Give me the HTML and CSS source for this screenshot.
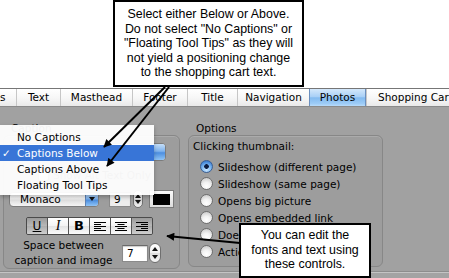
FILE: index.html
```html
<!DOCTYPE html>
<html>
<head>
<meta charset="utf-8">
<link rel="stylesheet" href="styles.css">
</head>
<body>
<div class="page">
  <header class="top">
    <div class="callout callout-top">Select either Below or Above.<br>Do not select "No Captions" or<br>"Floating Tool Tips" as they will<br>not yield a positioning change<br>to the shopping cart text.</div>
  </header>

  <nav class="tabs">
    <span class="tab tab-s">s</span>
    <span class="tab tab-text">Text</span>
    <span class="tab tab-masthead">Masthead</span>
    <span class="tab tab-footer">Footer</span>
    <span class="tab tab-title">Title</span>
    <span class="tab tab-nav">Navigation</span>
    <span class="tab tab-photos active">Photos</span>
    <span class="tab tab-cart">Shopping Cart</span>
  </nav>

  <main class="panel">
    <section class="group group-caption">
      <div class="group-label">Caption</div>
      <div class="group-box caption-box">
        <div class="popup popup-style"><span class="popup-text">Captions Below</span><span class="popup-arrow"></span></div>
        <div class="check-row"><span class="checkbox"></span><span>Show Alt Text Only</span></div>
        <div class="font-row">
          <div class="popup popup-font"><span class="popup-text">Monaco</span><span class="popup-arrow"><span class="tri-down"></span></span></div>
          <div class="field field-size">9</div>
          <div class="stepper stepper-small"><span class="tri-up"></span><span class="tri-down"></span></div>
          <div class="color-well"><span class="swatch"></span></div>
        </div>
        <div class="segmented">
          <span class="seg pressed"><span class="u">U</span></span>
          <span class="seg"><span class="i">I</span></span>
          <span class="seg"><span class="b">B</span></span>
          <span class="seg">
            <svg width="12" height="11" viewBox="0 0 12 11"><path d="M0 1.5h12M0 3.5h7M0 5.5h12M0 7.5h7M0 9.5h12" stroke="#000" stroke-width="1"/></svg>
          </span>
          <span class="seg">
            <svg width="12" height="11" viewBox="0 0 12 11"><path d="M0 1.5h12M2.5 3.5h7M0 5.5h12M2.5 7.5h7M0 9.5h12" stroke="#000" stroke-width="1"/></svg>
          </span>
          <span class="seg pressed">
            <svg width="12" height="11" viewBox="0 0 12 11"><path d="M0 1.5h12M5 3.5h7M0 5.5h12M5 7.5h7M0 9.5h12" stroke="#000" stroke-width="1"/></svg>
          </span>
        </div>
        <div class="space-row">
          <div class="space-label">Space between<br>caption and image</div>
          <div class="field field-num">7</div>
          <div class="stepper stepper-num"><span class="tri-up"></span><span class="tri-down"></span></div>
        </div>
      </div>
    </section>

    <section class="group group-options">
      <div class="group-label">Options</div>
      <div class="group-box options-box">
        <div class="sub-label">Clicking thumbnail:</div>
        <ul class="radios">
          <li><span class="radio on"></span>Slideshow (different page)</li>
          <li><span class="radio"></span>Slideshow (same page)</li>
          <li><span class="radio"></span>Opens big picture</li>
          <li><span class="radio"></span>Opens embedded link</li>
          <li><span class="radio"></span>Does nothing</li>
          <li><span class="radio"></span>Action</li>
        </ul>
      </div>
    </section>
  </main>

  <footer class="bottom"></footer>

  <ul class="menu">
    <li>No Captions</li>
    <li class="selected"><span class="check">✓</span>Captions Below</li>
    <li>Captions Above</li>
    <li>Floating Tool Tips</li>
  </ul>

  <div class="callout callout-bottom">You can edit the<br>fonts and text using<br>these controls.</div>

  <svg class="arrows" width="449" height="278" viewBox="0 0 449 278">
    <defs>
      <marker id="ah" viewBox="0 0 10 10" refX="9" refY="5" markerWidth="11" markerHeight="8" markerUnits="userSpaceOnUse" orient="auto">
        <path d="M0 0L10 5L0 10z" fill="#000"/>
      </marker>
    </defs>
    <path d="M165 87L104 147" stroke="#000" stroke-width="2" marker-end="url(#ah)"/>
    <path d="M169 87L107 166" stroke="#000" stroke-width="2" marker-end="url(#ah)"/>
    <path d="M240 243L167 236" stroke="#000" stroke-width="2" marker-end="url(#ah)"/>
  </svg>
</div>
</body>
</html>
```

FILE: styles.css
```css
html, body {
  margin: 0;
  padding: 0;
}

body {
  font-family: "DejaVu Sans", sans-serif;
  font-size: 10.5px;
  color: #000;
  background: #fff;
}

.page {
  position: relative;
  width: 449px;
  height: 278px;
  overflow: hidden;
  background: #a0a0a0;
}

/* ---------- callouts ---------- */
.top {
  height: 88px;
  background: #fff;
  padding-left: 113px;
  box-sizing: border-box;
}

.callout {
  background: #fff;
  border: 2px solid #000;
  box-sizing: border-box;
  font-family: "Liberation Sans", Arial, sans-serif;
  font-size: 12.4px;
  line-height: 14.5px;
  text-align: center;
  color: #000;
}

.callout-top {
  width: 191px;
  height: 87px;
  padding-top: 5px;
}

.callout-bottom {
  position: absolute;
  left: 239px;
  top: 223px;
  width: 132px;
  height: 55px;
  padding-top: 3px;
}

/* ---------- tabs ---------- */
.tabs {
  display: flex;
  height: 19px;
  box-sizing: border-box;
  border-top: 1px solid #767676;
  border-bottom: 1px solid #8a8a8a;
  background: linear-gradient(#ffffff, #f6f6f6 55%, #e9e9e9);
  white-space: nowrap;
  overflow: hidden;
}

.tab {
  flex: none;
  box-sizing: border-box;
  border-left: 1px solid #c6c6c6;
  line-height: 17px;
  text-align: center;
}

.tab-s { width: 16px; border-left: none; text-align: left; }
.tab-text { width: 44px; }
.tab-masthead { width: 72px; }
.tab-footer { width: 55px; }
.tab-title { width: 50px; }
.tab-nav { width: 72px; }
.tab-photos { width: 57px; }
.tab-cart { width: 100px; text-align: left; padding-left: 11px; }

.tab.active {
  border-left-color: #6a8fbf;
  border-right: 1px solid #6a8fbf;
  background: linear-gradient(#d4e8fb 0%, #a9d0f6 45%, #83bbf0 52%, #9ccbf6 85%, #b8dbfa 100%);
}

/* ---------- panel ---------- */
.panel {
  display: flex;
  gap: 8px;
  height: 164px;
  box-sizing: border-box;
  padding: 14px 0 4px 3px;
  background: #a1a1a1;
}

.group {
  display: flex;
  flex-direction: column;
}

.group-caption { width: 177px; }
.group-options { width: 195px; }

.group-label {
  height: 14px;
  line-height: 14px;
  padding-left: 8px;
}

.group-box {
  flex: 1;
  box-sizing: border-box;
  border: 1px solid #878787;
  border-radius: 6px;
  background: #9d9d9d;
  box-shadow: inset 0 1px 0 rgba(255,255,255,0.15);
}

/* caption box */
.caption-box {
  display: flex;
  flex-direction: column;
  padding: 7px 0 0 4px;
}

.popup {
  display: flex;
  box-sizing: border-box;
  border: 1px solid #7c7c7c;
  border-radius: 4px;
  background: linear-gradient(#ffffff, #f0f0f0 45%, #dedede 55%, #f4f4f4);
  overflow: hidden;
}

.popup-text {
  flex: 1;
  padding-left: 10px;
}

.popup-arrow {
  display: flex;
  align-items: center;
  justify-content: center;
  width: 13px;
  border-left: 1px solid #5d82b5;
  background: linear-gradient(#c4def8, #7fb3ee 45%, #4d8fe0 55%, #8fc4f6);
}

.popup-style {
  width: 147px;
  height: 18px;
  margin-left: 11px;
  line-height: 16px;
}

.check-row {
  display: flex;
  align-items: center;
  gap: 4px;
  height: 14px;
  margin: 7px 0 0 30px;
  color: #333;
  white-space: nowrap;
}

.checkbox {
  flex: none;
  width: 11px;
  height: 11px;
  box-sizing: border-box;
  border: 1px solid #777;
  border-radius: 2px;
  background: linear-gradient(#fff, #ddd);
}

.font-row {
  display: flex;
  align-items: center;
  height: 18px;
  margin-top: 8px;
}

.popup-font {
  width: 90px;
  height: 15px;
  margin-left: 1px;
  line-height: 13px;
}

.popup-font .popup-arrow { width: 12px; }

.tri-down, .tri-up {
  display: block;
  width: 0;
  height: 0;
  border-left: 3px solid transparent;
  border-right: 3px solid transparent;
}

.tri-down { border-top: 4px solid #111; }
.tri-up { border-bottom: 4px solid #111; }

.field {
  box-sizing: border-box;
  background: #fff;
  border: 1px solid #8a8a8a;
  border-top-color: #6a6a6a;
  box-shadow: inset 0 1px 1px rgba(0,0,0,0.2);
  padding-left: 4px;
}

.field-size {
  width: 22px;
  height: 15px;
  line-height: 13px;
  margin-left: 10px;
  background: #ededed;
}

.stepper {
  display: flex;
  flex-direction: column;
  align-items: center;
  justify-content: space-between;
  box-sizing: border-box;
  border: 1px solid #6f6f6f;
  border-radius: 6px;
  background: linear-gradient(#f8f8f8, #e4e4e4 50%, #cfcfcf 52%, #f2f2f2);
  padding: 3px 0;
}

.stepper-small {
  width: 10px;
  height: 18px;
  margin-left: 2px;
}

.color-well {
  display: flex;
  align-items: center;
  justify-content: center;
  width: 25px;
  height: 18px;
  margin-left: 6px;
  box-sizing: border-box;
  border: 1px solid #7a7a7a;
  background: linear-gradient(#fafafa, #dcdcdc);
}

.swatch {
  width: 17px;
  height: 11px;
  background: #000;
}

.segmented {
  display: flex;
  align-self: flex-start;
  margin: 9px 0 0 18px;
  border: 1px solid #4a4a4a;
  border-radius: 2px;
  overflow: hidden;
}

.seg {
  display: flex;
  align-items: center;
  justify-content: center;
  width: 20px;
  height: 16px;
  border-left: 1px solid #555;
  background: linear-gradient(#ffffff, #f3f3f3 50%, #e4e4e4 52%, #fbfbfb);
}

.seg:first-child { border-left: none; }

.seg.pressed {
  background: linear-gradient(#9a9a9a, #b9b9b9 50%, #adadad 52%, #cfcfcf);
}

.seg .u {
  font-size: 12px;
  text-decoration: underline;
  line-height: 14px;
}

.seg .i {
  font-family: "Liberation Serif", serif;
  font-style: italic;
  font-size: 14px;
  line-height: 14px;
}

.seg .b {
  font-weight: bold;
  font-size: 13px;
  line-height: 14px;
}

.space-row {
  display: flex;
  align-items: center;
  margin-top: 3px;
  height: 30px;
}

.space-label {
  width: 105px;
  margin-left: 3px;
  text-align: center;
  line-height: 15px;
}

.field-num {
  width: 26px;
  height: 17px;
  line-height: 15px;
  margin-left: 6px;
}

.stepper-num {
  width: 12px;
  height: 20px;
  margin-left: 1px;
  border-radius: 7px;
  background: linear-gradient(#ffffff, #eeeeee 50%, #dddddd 52%, #f6f6f6);
}

/* options box */
.options-box {
  padding: 3px 0 0 4px;
}

.sub-label {
  line-height: 14px;
}

.radios {
  list-style: none;
  margin: 5px 0 0 7px;
  padding: 0;
}

.radios li {
  display: flex;
  align-items: center;
  gap: 5px;
  height: 17px;
  white-space: nowrap;
}

.radio {
  flex: none;
  width: 13px;
  height: 13px;
  box-sizing: border-box;
  border: 1px solid #6e6e6e;
  border-radius: 50%;
  background: radial-gradient(circle at 50% 75%, #ffffff 0%, #f2f2f2 40%, #d4d4d4 75%, #c0c0c0 100%);
}

.radio.on {
  border-color: #3a5f94;
  background:
    radial-gradient(circle at 50% 50%, #0d1c40 0, #0d1c40 2px, transparent 2.6px),
    radial-gradient(circle at 50% 80%, #c9e6ff 0%, #7db7f0 45%, #3f82d6 80%, #2f6cc0 100%);
}

.bottom {
  height: 7px;
  box-sizing: border-box;
  border-top: 1px solid #8d8d8d;
  box-shadow: inset 0 1px 0 #c4c4c4;
  background: #a3a3a3;
}

/* ---------- popup menu ---------- */
.menu {
  position: absolute;
  left: 0;
  top: 125px;
  width: 154px;
  margin: 0;
  padding: 4px 0 2px;
  list-style: none;
  background: rgba(255,255,255,0.95);
  box-shadow: 0 2px 4px rgba(0,0,0,0.25);
}

.menu li {
  position: relative;
  height: 16px;
  line-height: 16px;
  padding-left: 17px;
  white-space: nowrap;
}

.menu li.selected {
  background: #3875d7;
  color: #fff;
}

.menu .check {
  position: absolute;
  left: 2px;
  top: 0;
}

/* ---------- arrows ---------- */
.arrows {
  position: absolute;
  left: 0;
  top: 0;
  pointer-events: none;
}
```
